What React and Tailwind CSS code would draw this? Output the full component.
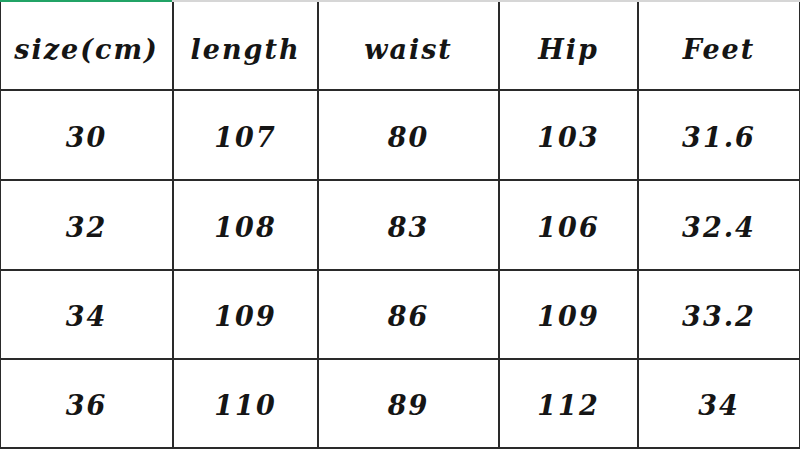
import React from 'react';

const headers = ['size(cm)', 'length', 'waist', 'Hip', 'Feet'];

const rows = [
  ['30', '107', '80', '103', '31.6'],
  ['32', '108', '83', '106', '32.4'],
  ['34', '109', '86', '109', '33.2'],
  ['36', '110', '89', '112', '34'],
];

const Cell = ({ children, first, head }) => (
  <div
    className={`flex items-center justify-center border-b-2 border-r-2 border-[#2a2a2a] ${first ? 'border-l-2' : ''} ${head ? 'pt-2' : 'pt-1'}`}
  >
    <span className="text-[27px] italic font-bold tracking-[2px] text-[#151515] leading-none">{children}</span>
  </div>
);

export default function App() {
  return (
    <div className="w-[800px] h-[450px] bg-white overflow-hidden" style={{ fontFamily: '"DejaVu Serif", serif' }}>
      <div className="h-[2px] bg-[#d6d6d6]">
        <div className="h-[2px] w-[172px] bg-[#21a366]" />
      </div>
      <div className="grid grid-cols-[175px_145px_181px_139px_162px] grid-rows-[89px_90px_90px_89px_89px] -ml-[1px]">
        {headers.map((h, i) => (
          <Cell key={h} first={i === 0} head>{h}</Cell>
        ))}
        {rows.map((r) =>
          r.map((v, i) => (
            <Cell key={r[0] + i} first={i === 0}>{v}</Cell>
          ))
        )}
      </div>
    </div>
  );
}
